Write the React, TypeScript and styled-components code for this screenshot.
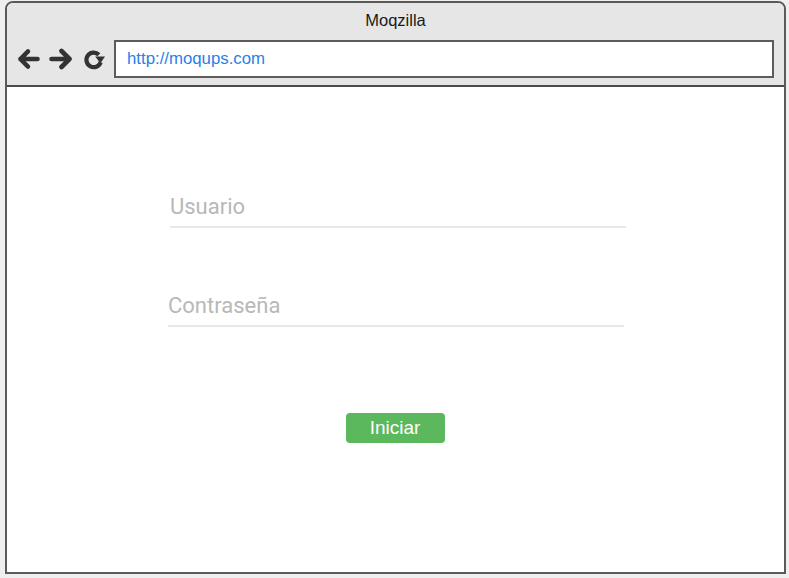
import React from "react";
import styled, { createGlobalStyle } from "styled-components";

const Global = createGlobalStyle`
  html, body { margin: 0; padding: 0; background: #efefef; }
  body { font-family: "Liberation Sans", Arial, sans-serif; }
  * { box-sizing: border-box; }
`;

const Page = styled.div`
  width: 789px;
  height: 578px;
  padding: 1px 3px 4px 5px;
  display: flex;
`;

const Browser = styled.div`
  flex: 1;
  display: flex;
  flex-direction: column;
  border: 2px solid #5a5a5a;
  border-radius: 8px 8px 0 0;
  background: #ffffff;
  overflow: hidden;
`;

const Header = styled.div`
  height: 84px;
  background: #e6e6e6;
  border-bottom: 2px solid #4a4a4a;
  display: flex;
  flex-direction: column;
`;

const Title = styled.div`
  height: 36px;
  display: flex;
  align-items: center;
  justify-content: center;
  padding-bottom: 1px;
  font-size: 16.5px;
  color: #1a1a1a;
`;

const Toolbar = styled.div`
  display: flex;
  align-items: center;
  padding: 1px 10px 0 10px;
`;

const NavButton = styled.span<{ $w: number; $gap: number }>`
  width: ${(p) => p.$w}px;
  margin-right: ${(p) => p.$gap}px;
  height: 24px;
  display: flex;
  align-items: center;
  justify-content: center;
`;

const UrlBar = styled.div`
  flex: 1;
  height: 38px;
  background: #ffffff;
  border: 2px solid #5c5c5c;
  display: flex;
  align-items: center;
  padding-left: 11px;
  font-size: 16.8px;
  color: #2a7fe8;
`;

const Content = styled.div`
  flex: 1;
  display: flex;
  flex-direction: column;
  padding: 107px 0 0 161px;
`;

const Field = styled.div<{ $shift: number; $gap: number }>`
  width: 456px;
  margin-left: ${(p) => p.$shift}px;
  margin-top: ${(p) => p.$gap}px;
  padding: 0 0 6px 0;
  border-bottom: 2px solid #e8e8e8;
  font-family: Roboto, "Noto Sans", sans-serif;
  font-size: 22px;
  line-height: 26px;
  color: #b8b8b8;
`;

const ButtonRow = styled.div`
  width: 456px;
  margin-top: 86px;
  margin-left: -1px;
  display: flex;
  justify-content: center;
`;

const Button = styled.button`
  width: 99px;
  height: 30px;
  border: none;
  border-radius: 4px;
  background: #5cb85c;
  color: #ffffff;
  font-family: "Liberation Sans", Arial, sans-serif;
  font-size: 19px;
  padding: 0 0 1px 0;
  display: flex;
  align-items: center;
  justify-content: center;
`;

const ArrowIcon = ({ dir }: { dir: "left" | "right" }) => (
  <svg
    width="24"
    height="22"
    viewBox="0 0 24 22"
    style={dir === "right" ? { transform: "scaleX(-1)" } : undefined}
  >
    <path
      d="M3.5 11 H21.5 M11.5 3 L3.5 11 L11.5 19"
      fill="none"
      stroke="#333"
      strokeWidth="4.6"
      strokeLinecap="round"
      strokeLinejoin="round"
    />
  </svg>
);

const RefreshIcon = () => (
  <svg width="23" height="23" viewBox="0 0 23 23">
    <path
      d="M16.6 6.6 A7.6 7.6 0 1 0 18.4 14.4"
      fill="none"
      stroke="#333"
      strokeWidth="4.4"
      strokeLinecap="butt"
    />
    <polygon points="12.8,8.4 23,8.4 18.2,15.4" fill="#333" />
  </svg>
);

export default function App() {
  return (
    <Page>
      <Global />
      <Browser>
        <Header>
          <Title>Moqzilla</Title>
          <Toolbar>
            <NavButton $w={23} $gap={9}>
              <ArrowIcon dir="left" />
            </NavButton>
            <NavButton $w={24} $gap={10}>
              <ArrowIcon dir="right" />
            </NavButton>
            <NavButton $w={22} $gap={9}>
              <RefreshIcon />
            </NavButton>
            <UrlBar>http://moqups.com</UrlBar>
          </Toolbar>
        </Header>
        <Content>
          <Field $shift={2} $gap={0}>Usuario</Field>
          <Field $shift={0} $gap={65}>Contraseña</Field>
          <ButtonRow>
            <Button>Iniciar</Button>
          </ButtonRow>
        </Content>
      </Browser>
    </Page>
  );
}
